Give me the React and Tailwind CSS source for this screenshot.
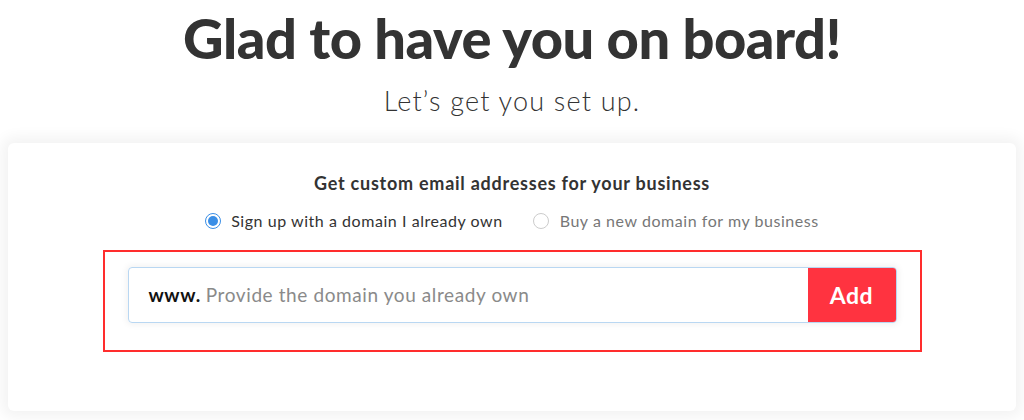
export default function App() {
  return (
    <div className="w-[1024px] h-[420px] bg-white overflow-hidden" style={{ fontFamily: "Lato, 'Open Sans', sans-serif" }}>
      <div className="flex flex-col items-center">
        <h1 className="mt-[6px] text-[56px] leading-[64px] font-black text-[#333333] tracking-[-0.5px]">Glad to have you on board!</h1>
        <p className="mt-[15px] text-[27px] leading-[32px] font-light text-[#333333] tracking-[1.2px]">Let’s get you set up.</p>
      </div>
      <div className="mx-[8px] mt-[26px] h-[268px] bg-white rounded-[6px] shadow-[0_0_14px_6px_rgba(0,0,0,0.05)] flex flex-col items-center">
        <div className="mt-[29px] text-[18px] leading-[22px] font-bold text-[#333333] tracking-[0.75px]">Get custom email addresses for your business</div>
        <div className="mt-[16px] flex items-center text-[16px] leading-[22px] tracking-[0.55px]">
          <span className="w-[16px] h-[16px] rounded-full border-[1.5px] border-[#3a8ee6] flex items-center justify-center">
            <span className="w-[10px] h-[10px] rounded-full bg-[#3a8ee6]" />
          </span>
          <span className="ml-[10px] text-[#333333]">Sign up with a domain I already own</span>
          <span className="ml-[30px] w-[16px] h-[16px] rounded-full border border-[#cccccc]" />
          <span className="ml-[11px] text-[#777777]">Buy a new domain for my business</span>
        </div>
        <div className="mt-[18px] w-[819px] h-[102px] border-2 border-[#ff2d2d] flex justify-center pt-[15px]">
          <div className="w-[769px] h-[56px] flex rounded-[4px] border border-[#b9d7f2] shadow-[0_0_6px_2px_rgba(0,0,0,0.05)] overflow-hidden">
            <div className="flex-1 flex items-center pl-[20px] text-[19px] tracking-[0.6px]">
              <span className="font-bold text-[#111111]">www.</span>
              <span className="ml-[5px] text-[#8a8a8a]">Provide the domain you already own</span>
            </div>
            <button className="w-[88px] h-full bg-[#ff3340] text-white text-[23px] font-bold tracking-[0.5px]">Add</button>
          </div>
        </div>
      </div>
    </div>
  );
}
